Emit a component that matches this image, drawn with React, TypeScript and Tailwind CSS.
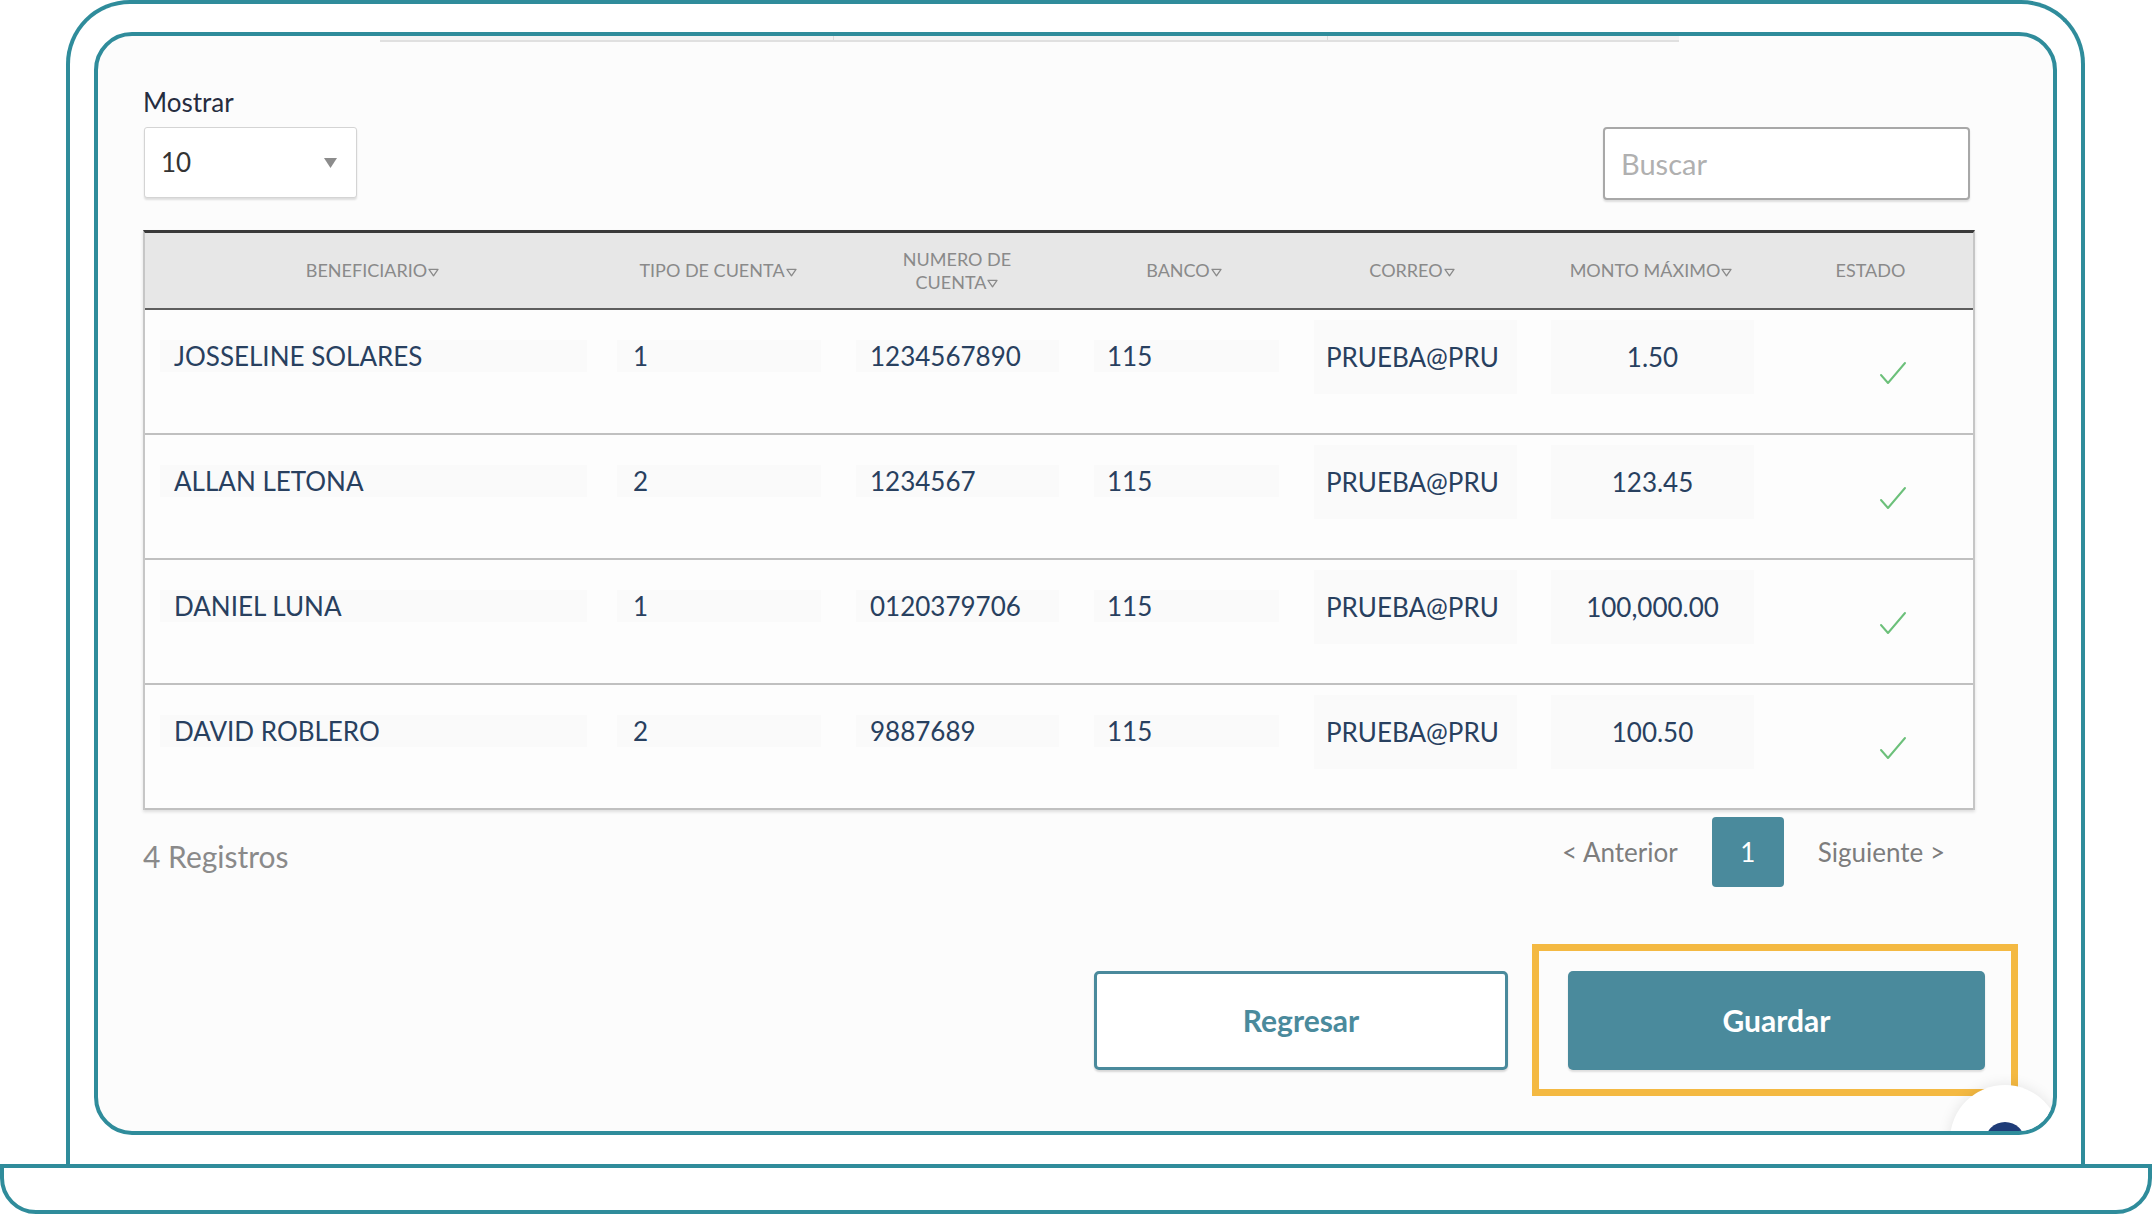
import React from 'react';

type Fila = {
  nombre: string;
  tipo: string;
  numero: string;
  banco: string;
  correo: string;
  monto: string;
};

const filas: Fila[] = [
  { nombre: 'JOSSELINE SOLARES', tipo: '1', numero: '1234567890', banco: '115', correo: 'PRUEBA@PRU', monto: '1.50' },
  { nombre: 'ALLAN LETONA', tipo: '2', numero: '1234567', banco: '115', correo: 'PRUEBA@PRU', monto: '123.45' },
  { nombre: 'DANIEL LUNA', tipo: '1', numero: '0120379706', banco: '115', correo: 'PRUEBA@PRU', monto: '100,000.00' },
  { nombre: 'DAVID ROBLERO', tipo: '2', numero: '9887689', banco: '115', correo: 'PRUEBA@PRU', monto: '100.50' },
];

const gridCols = 'grid grid-cols-[455px_236px_242px_212px_244px_234px_205px]';

function Flecha() {
  return (
    <svg width="11" height="9" viewBox="0 0 11 9" className="ml-[1px] inline-block">
      <path d="M1 1.3 H10 L5.5 7.8 Z" fill="none" stroke="#8a8a8a" strokeWidth="1.3" strokeLinejoin="round" />
    </svg>
  );
}

function Encabezado({ children, orden = true }: { children: React.ReactNode; orden?: boolean }) {
  return (
    <div className="flex items-center justify-center text-center text-[18px] leading-[23px] text-[#8a8a8a] uppercase">
      <span>
        {children}
        {orden && <Flecha />}
      </span>
    </div>
  );
}

function Check() {
  return (
    <svg width="28" height="24" viewBox="0 0 28 24">
      <polyline points="2,14 9,22 26,2" fill="none" stroke="#6cc07a" strokeWidth="2" strokeLinecap="round" strokeLinejoin="round" />
    </svg>
  );
}

function Celda({ texto, ml, mr, pl, alto = false, centro = false }: { texto: string; ml: string; mr: string; pl: string; alto?: boolean; centro?: boolean }) {
  return (
    <div className={alto ? 'pt-[10px]' : 'pt-[30px]'}>
      <div
        className={`${ml} ${mr} ${pl} ${alto ? 'h-[74px]' : 'h-[32px]'} ${centro ? 'justify-center' : ''} flex items-center bg-[#fafafa] text-[26px] text-[#28405f] whitespace-nowrap`}
      >
        {texto}
      </div>
    </div>
  );
}

export default function App() {
  return (
    <div className="w-[2154px] h-[1214px] bg-white overflow-hidden font-['Lato','Liberation_Sans',sans-serif]">
      {/* marco exterior */}
      <div className="ml-[66px] w-[2019px] h-[1164px] border-[4px] border-b-0 border-[#2f8c9b] rounded-t-[64px] pt-[28px] pl-[24px]">
        {/* pantalla */}
        <div className="relative w-[1963px] h-[1103px] border-[4px] border-[#2f8c9b] rounded-[38px] bg-[#fcfcfc] overflow-hidden">
          <div className="pl-[45px] w-[1877px]">
            {/* resto de tabla anterior */}
            <div className="ml-[237px] w-[1299px] h-[6px] flex bg-[#f3f3f3] border-b-2 border-[#e0e0e0]">
              <div className="w-[454px] border-r border-[#dcdcdc]" />
              <div className="w-[494px] border-r border-[#dcdcdc]" />
              <div className="flex-1" />
            </div>

            {/* filtros */}
            <div className="mt-[44px] flex items-start justify-between">
              <div className="flex flex-col">
                <span className="h-[32px] text-[26px] leading-[32px] text-[#262d3f]">Mostrar</span>
                <div className="mt-[9px] ml-[1px] w-[213px] h-[71px] flex items-center justify-between pl-[16px] pr-[19px] bg-white border border-[#d4d4d4] rounded-[3px] shadow-[0_2px_2px_rgba(0,0,0,0.12)]">
                  <span className="text-[26px] text-[#333]">10</span>
                  <svg width="13" height="10" viewBox="0 0 13 10">
                    <path d="M0 0 H13 L6.5 10 Z" fill="#8c8c8c" />
                  </svg>
                </div>
              </div>
              <div className="mt-[41px] mr-[5px] w-[367px] h-[73px] flex items-center pl-[16px] bg-white border-2 border-[#a8a8a8] rounded-[4px] shadow-[0_2px_2px_rgba(0,0,0,0.12)]">
                <span className="text-[29px] text-[#b0b0b0]">Buscar</span>
              </div>
            </div>

            {/* tabla */}
            <div className="mt-[30px] w-[1832px] border-t-[3px] border-t-[#3a3a3a] border-x-2 border-x-[#c6c6c6] shadow-[0_2px_3px_rgba(0,0,0,0.12)]">
              <div className={`${gridCols} h-[77px] items-center bg-[#e7e7e7] border-b-2 border-[#5e5e5e]`}>
                <Encabezado>Beneficiario</Encabezado>
                <Encabezado>Tipo de cuenta</Encabezado>
                <Encabezado>
                  Numero de
                  <br />
                  cuenta
                </Encabezado>
                <Encabezado>Banco</Encabezado>
                <Encabezado>Correo</Encabezado>
                <Encabezado>Monto máximo</Encabezado>
                <Encabezado orden={false}>Estado</Encabezado>
              </div>
              {filas.map((f) => (
                <div key={f.nombre} className={`${gridCols} h-[125px] bg-[#fdfdfd] border-b-2 border-[#c0c0c0]`}>
                  <Celda texto={f.nombre} ml="ml-[15px]" mr="mr-[13px]" pl="pl-[14px]" />
                  <Celda texto={f.tipo} ml="ml-[17px]" mr="mr-[15px]" pl="pl-[16px]" />
                  <Celda texto={f.numero} ml="ml-[20px]" mr="mr-[19px]" pl="pl-[14px]" />
                  <Celda texto={f.banco} ml="ml-[16px]" mr="mr-[11px]" pl="pl-[13px]" />
                  <Celda texto={f.correo} ml="ml-[24px]" mr="mr-[17px]" pl="pl-[12px]" alto />
                  <Celda texto={f.monto} ml="ml-[17px]" mr="mr-[14px]" pl="pl-0" alto centro />
                  <div className="pt-[51px] pl-[111px]">
                    <Check />
                  </div>
                </div>
              ))}
            </div>

            {/* pie de tabla */}
            <div className="mt-[7px] w-[1832px] h-[70px] flex items-center justify-between">
              <span className="text-[30px] text-[#8a8a8a] translate-y-[4px]">4 Registros</span>
              <div className="flex items-center gap-[34px] pr-[30px]">
                <span className="text-[26px] text-[#7d7d7d]">&lt; Anterior</span>
                <div className="w-[72px] h-[70px] flex items-center justify-center rounded-[4px] bg-[#4a8a9c] text-[26px] text-white">
                  1
                </div>
                <span className="text-[26px] text-[#7d7d7d]">Siguiente &gt;</span>
              </div>
            </div>

            {/* botones */}
            <div className="mt-[57px] w-[1832px] flex items-center justify-end">
              <button className="w-[414px] h-[99px] flex items-center justify-center bg-white border-[3px] border-[#4a8a9c] rounded-[5px] shadow-[0_2px_2px_rgba(0,0,0,0.15)] text-[30px] font-bold text-[#4a8a9c]">
                Regresar
              </button>
              <div className="ml-[24px] -mr-[43px] border-[7px] border-[#f4b942] pl-[29px] pr-[26px] pt-[20px] pb-[19px]">
                <button className="w-[417px] h-[99px] flex items-center justify-center bg-[#4a8a9c] rounded-[5px] shadow-[0_2px_2px_rgba(0,0,0,0.12)] text-[30px] font-bold text-white">
                  Guardar
                </button>
              </div>
            </div>
          </div>

          {/* boton flotante recortado */}
          <div className="absolute left-[1852px] top-[1049px] w-[110px] h-[110px] rounded-full bg-white shadow-[0_0_14px_rgba(0,0,0,0.1)] flex items-center justify-center">
            <div className="w-[40px] h-[40px] rounded-full bg-[#1f3c78] translate-y-[2px]" />
          </div>
        </div>
      </div>

      {/* base */}
      <div className="w-[2152px] h-[50px] border-[4px] border-[#2f8c9b] rounded-b-[36px]" />
    </div>
  );
}
